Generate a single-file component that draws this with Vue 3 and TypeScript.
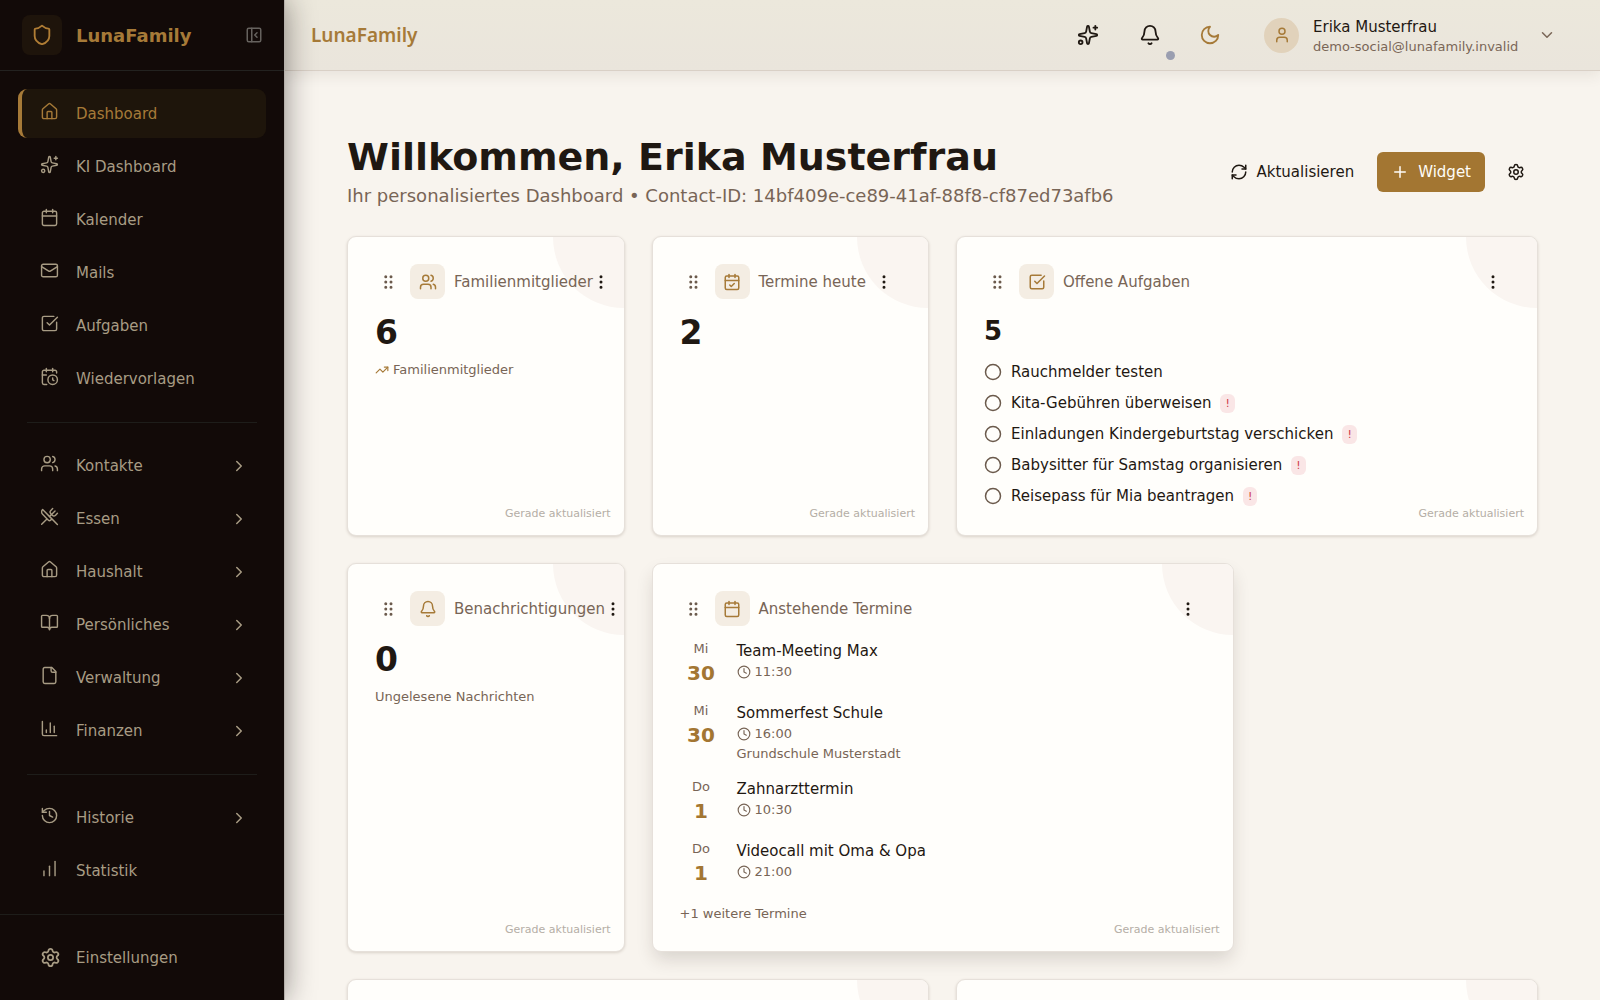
<script setup lang="ts">
import { h, type FunctionalComponent } from 'vue'

/* Outline icons on a 24 × 24 grid; each entry lists the paths of one glyph. */
const glyphs: Record<string, string[]> = {
  shield: ['M20 13c0 5-3.500 7.500-7.660 8.950a1 1 0 0 1-.67-.01C7.500 20.500 4 18 4 13V6a1 1 0 0 1 1-1c2 0 4.500-1.200 6.240-2.720a1.170 1.170 0 0 1 1.520 0C14.510 3.810 17 5 19 5a1 1 0 0 1 1 1z'],
  panel: ['M5 3h14a2 2 0 0 1 2 2v14a2 2 0 0 1-2 2H5a2 2 0 0 1-2-2V5a2 2 0 0 1 2-2z', 'M9 3v18', 'm16 15-3-3 3-3'],
  house: ['M15 21v-8a1 1 0 0 0-1-1h-4a1 1 0 0 0-1 1v8', 'M3 10a2 2 0 0 1 .709-1.528l7-5.999a2 2 0 0 1 2.582 0l7 5.999A2 2 0 0 1 21 10v9a2 2 0 0 1-2 2H5a2 2 0 0 1-2-2z'],
  sparkles: ['M11.017 2.814a1 1 0 0 1 1.966 0l1.051 5.558a2 2 0 0 0 1.594 1.594l5.558 1.051a1 1 0 0 1 0 1.966l-5.558 1.051a2 2 0 0 0-1.594 1.594l-1.051 5.558a1 1 0 0 1-1.966 0l-1.051-5.558a2 2 0 0 0-1.594-1.594l-5.558-1.051a1 1 0 0 1 0-1.966l5.558-1.051a2 2 0 0 0 1.594-1.594z', 'M20 2v4', 'M22 4h-4', 'M2 20a2 2 0 1 0 4 0a2 2 0 1 0-4 0'],
  calendar: ['M8 2v4', 'M16 2v4', 'M5 4h14a2 2 0 0 1 2 2v14a2 2 0 0 1-2 2H5a2 2 0 0 1-2-2V6a2 2 0 0 1 2-2z', 'M3 10h18'],
  calendarCheck: ['M8 2v4', 'M16 2v4', 'M5 4h14a2 2 0 0 1 2 2v14a2 2 0 0 1-2 2H5a2 2 0 0 1-2-2V6a2 2 0 0 1 2-2z', 'M3 10h18', 'm9 16 2 2 4-4'],
  calendarClock: ['M16 14v2.200l1.600 1', 'M16 2v4', 'M21 7.500V6a2 2 0 0 0-2-2H5a2 2 0 0 0-2 2v14a2 2 0 0 0 2 2h3.500', 'M3 10h5', 'M8 2v4', 'M10 16a6 6 0 1 0 12 0a6 6 0 1 0-12 0'],
  mail: ['m22 7-8.991 5.727a2 2 0 0 1-2.009 0L2 7', 'M4 4h16a2 2 0 0 1 2 2v12a2 2 0 0 1-2 2H4a2 2 0 0 1-2-2V6a2 2 0 0 1 2-2z'],
  check: ['M21 10.500V19a2 2 0 0 1-2 2H5a2 2 0 0 1-2-2V5a2 2 0 0 1 2-2h12.500', 'm9 11 3 3L22 4'],
  users: ['M16 21v-2a4 4 0 0 0-4-4H6a4 4 0 0 0-4 4v2', 'M16 3.128a4 4 0 0 1 0 7.744', 'M22 21v-2a4 4 0 0 0-3-3.870', 'M5 7a4 4 0 1 0 8 0a4 4 0 1 0-8 0'],
  user: ['M19 21v-2a4 4 0 0 0-4-4H9a4 4 0 0 0-4 4v2', 'M8 7a4 4 0 1 0 8 0a4 4 0 1 0-8 0'],
  food: ['m16 2-2.300 2.300a3 3 0 0 0 0 4.200l1.800 1.800a3 3 0 0 0 4.200 0L22 8', 'M15 15 3.300 3.300a4.200 4.200 0 0 0 0 6l7.300 7.300c.7.7 2 .7 2.800 0L15 15Zm0 0 7 7', 'm2.100 21.800 6.400-6.300', 'm19 5-7 7'],
  book: ['M12 7v14', 'M3 18a1 1 0 0 1-1-1V4a1 1 0 0 1 1-1h5a4 4 0 0 1 4 4 4 4 0 0 1 4-4h5a1 1 0 0 1 1 1v13a1 1 0 0 1-1 1h-6a3 3 0 0 0-3 3 3 3 0 0 0-3-3z'],
  file: ['M15 2H6a2 2 0 0 0-2 2v16a2 2 0 0 0 2 2h12a2 2 0 0 0 2-2V7Z', 'M14 2v4a2 2 0 0 0 2 2h4'],
  chart: ['M3 3v16a2 2 0 0 0 2 2h16', 'M18 17V9', 'M13 17V5', 'M8 17v-3'],
  history: ['M3 12a9 9 0 1 0 9-9 9.750 9.750 0 0 0-6.740 2.740L3 8', 'M3 3v5h5', 'M12 7v5l4 2'],
  bars: ['M5 21v-6', 'M12 21V9', 'M19 21V3'],
  gear: ['M9.671 4.136a2.340 2.340 0 0 1 4.659 0 2.340 2.340 0 0 0 3.319 1.915 2.340 2.340 0 0 1 2.330 4.033 2.340 2.340 0 0 0 0 3.831 2.340 2.340 0 0 1-2.330 4.033 2.340 2.340 0 0 0-3.319 1.915 2.340 2.340 0 0 1-4.659 0 2.340 2.340 0 0 0-3.320-1.915 2.340 2.340 0 0 1-2.330-4.033 2.340 2.340 0 0 0 0-3.831A2.340 2.340 0 0 1 6.350 6.051a2.340 2.340 0 0 0 3.319-1.915', 'M9 12a3 3 0 1 0 6 0a3 3 0 1 0-6 0'],
  right: ['m9 18 6-6-6-6'],
  down: ['m6 9 6 6 6-6'],
  bell: ['M10.268 21a2 2 0 0 0 3.464 0', 'M3.262 15.326A1 1 0 0 0 4 17h16a1 1 0 0 0 .740-1.673C19.410 13.956 18 12.499 18 8A6 6 0 0 0 6 8c0 4.499-1.411 5.956-2.738 7.326'],
  moon: ['M12 3a6 6 0 0 0 9 9 9 9 0 1 1-9-9Z'],
  refresh: ['M3 12a9 9 0 0 1 9-9 9.750 9.750 0 0 1 6.740 2.740L21 8', 'M21 3v5h-5', 'M21 12a9 9 0 0 1-9 9 9.750 9.750 0 0 1-6.740-2.740L3 16', 'M8 16H3v5'],
  plus: ['M5 12h14', 'M12 5v14'],
  trend: ['M16 7h6v6', 'm22 7-8.500 8.500-5-5L2 17'],
  clock: ['M12 6v6l4 2', 'M2 12a10 10 0 1 0 20 0a10 10 0 1 0-20 0'],
  circle: ['M2 12a10 10 0 1 0 20 0a10 10 0 1 0-20 0'],
  more: [5, 12, 19].map((y) => `M11 ${y}a1 1 0 1 0 2 0a1 1 0 1 0-2 0`),
  grip: [8, 15].flatMap((x) => [5, 12, 19].map((y) => `M${x} ${y}a1 1 0 1 0 2 0a1 1 0 1 0-2 0`)),
}

const Icon: FunctionalComponent<{ name: string; size: number }> = (props) =>
  h(
    'svg',
    {
      width: props.size,
      height: props.size,
      viewBox: '0 0 24 24',
      fill: 'none',
      stroke: 'currentColor',
      'stroke-width': 2,
      'stroke-linecap': 'round',
      'stroke-linejoin': 'round',
      'aria-hidden': 'true',
    },
    glyphs[props.name].map((d) => h('path', { d })),
  )
Icon.props = ['name', 'size']

interface NavItem {
  label: string
  icon: string
  expandable?: boolean
  active?: boolean
}

const navGroups: NavItem[][] = [
  [
    { label: 'Dashboard', icon: 'house', active: true },
    { label: 'KI Dashboard', icon: 'sparkles' },
    { label: 'Kalender', icon: 'calendar' },
    { label: 'Mails', icon: 'mail' },
    { label: 'Aufgaben', icon: 'check' },
    { label: 'Wiedervorlagen', icon: 'calendarClock' },
  ],
  [
    { label: 'Kontakte', icon: 'users', expandable: true },
    { label: 'Essen', icon: 'food', expandable: true },
    { label: 'Haushalt', icon: 'house', expandable: true },
    { label: 'Persönliches', icon: 'book', expandable: true },
    { label: 'Verwaltung', icon: 'file', expandable: true },
    { label: 'Finanzen', icon: 'chart', expandable: true },
  ],
  [
    { label: 'Historie', icon: 'history', expandable: true },
    { label: 'Statistik', icon: 'bars' },
  ],
]

interface Task {
  title: string
  urgent: boolean
}

interface Appointment {
  weekday: string
  day: number
  title: string
  time: string
  place?: string
}

interface Widget {
  title: string
  icon: string
  wide?: boolean
  raised?: boolean
  value?: number
  note?: string
  trend?: boolean
  tasks?: Task[]
  appointments?: Appointment[]
  more?: string
}

const widgets: Widget[] = [
  { title: 'Familienmitglieder', icon: 'users', value: 6, note: 'Familienmitglieder', trend: true },
  { title: 'Termine heute', icon: 'calendarCheck', value: 2 },
  {
    title: 'Offene Aufgaben',
    icon: 'check',
    wide: true,
    value: 5,
    tasks: [
      { title: 'Rauchmelder testen', urgent: false },
      { title: 'Kita-Gebühren überweisen', urgent: true },
      { title: 'Einladungen Kindergeburtstag verschicken', urgent: true },
      { title: 'Babysitter für Samstag organisieren', urgent: true },
      { title: 'Reisepass für Mia beantragen', urgent: true },
    ],
  },
  { title: 'Benachrichtigungen', icon: 'bell', value: 0, note: 'Ungelesene Nachrichten' },
  {
    title: 'Anstehende Termine',
    icon: 'calendar',
    wide: true,
    raised: true,
    appointments: [
      { weekday: 'Mi', day: 30, title: 'Team-Meeting Max', time: '11:30' },
      { weekday: 'Mi', day: 30, title: 'Sommerfest Schule', time: '16:00', place: 'Grundschule Musterstadt' },
      { weekday: 'Do', day: 1, title: 'Zahnarzttermin', time: '10:30' },
      { weekday: 'Do', day: 1, title: 'Videocall mit Oma & Opa', time: '21:00' },
    ],
    more: '+1 weitere Termine',
  },
]
</script>

<template>
  <div class="shell">
    <aside class="sidebar">
      <div class="brand">
        <span class="brand-mark"><Icon name="shield" :size="22" /></span>
        <strong class="brand-name">LunaFamily</strong>
        <button class="collapse" type="button" aria-label="Seitenleiste einklappen"><Icon name="panel" :size="18" /></button>
      </div>
      <nav class="nav" aria-label="Hauptnavigation">
        <ul v-for="(group, index) in navGroups" :key="index" class="nav-group">
          <li v-for="item in group" :key="item.label">
            <a href="#" class="nav-link" :class="{ active: item.active }">
              <Icon class="nav-icon" :name="item.icon" :size="19" />
              <span class="nav-label">{{ item.label }}</span>
              <Icon v-if="item.expandable" name="right" :size="18" />
            </a>
          </li>
        </ul>
      </nav>
      <div class="nav-footer">
        <a href="#" class="nav-link settings">
          <Icon name="gear" :size="21" />
          <span class="nav-label">Einstellungen</span>
        </a>
      </div>
    </aside>

    <div class="page">
      <header class="topbar">
        <span class="product">LunaFamily</span>
        <button class="tool" type="button" aria-label="KI-Assistent"><Icon name="sparkles" :size="22" /></button>
        <button class="tool" type="button" aria-label="Benachrichtigungen"><Icon name="bell" :size="22" /><span class="dot"></span></button>
        <button class="tool moon" type="button" aria-label="Dunkles Design"><Icon name="moon" :size="22" /></button>
        <button class="account" type="button">
          <span class="avatar"><Icon name="user" :size="18" /></span>
          <span class="identity">
            <span class="name">Erika Musterfrau</span>
            <span class="mail">demo-social@lunafamily.invalid</span>
          </span>
          <Icon name="down" :size="18" />
        </button>
      </header>

      <main class="content">
        <div class="intro">
          <div>
            <h1>Willkommen, Erika Musterfrau</h1>
            <p>Ihr personalisiertes Dashboard • Contact-ID: 14bf409e-ce89-41af-88f8-cf87ed73afb6</p>
          </div>
          <div class="actions">
            <button class="action" type="button"><Icon name="refresh" :size="18" />Aktualisieren</button>
            <button class="action primary" type="button"><Icon name="plus" :size="18" />Widget</button>
            <button class="action square" type="button" aria-label="Dashboard-Einstellungen"><Icon name="gear" :size="18" /></button>
          </div>
        </div>

        <div class="grid">
          <section v-for="w in widgets" :key="w.title" class="card" :class="{ wide: w.wide, raised: w.raised }">
            <div class="card-head">
              <button class="grip" type="button" aria-label="Widget verschieben"><Icon name="grip" :size="18" /></button>
              <span class="card-icon"><Icon :name="w.icon" :size="18" /></span>
              <h2>{{ w.title }}</h2>
              <button class="more" type="button" aria-label="Widget-Menü"><Icon name="more" :size="18" /></button>
            </div>
            <p v-if="w.value !== undefined" class="value" :class="{ compact: w.tasks }">{{ w.value }}</p>
            <p v-if="w.note" class="note"><Icon v-if="w.trend" class="trend" name="trend" :size="14" />{{ w.note }}</p>
            <ul v-if="w.tasks" class="tasks">
              <li v-for="task in w.tasks" :key="task.title">
                <Icon class="ring" name="circle" :size="18" />
                <span>{{ task.title }}</span>
                <span v-if="task.urgent" class="urgent">!</span>
              </li>
            </ul>
            <ul v-if="w.appointments" class="appointments">
              <li v-for="a in w.appointments" :key="a.title">
                <span class="date"><span class="weekday">{{ a.weekday }}</span><strong>{{ a.day }}</strong></span>
                <span class="details">
                  <span class="event">{{ a.title }}</span>
                  <span class="time"><Icon name="clock" :size="14" />{{ a.time }}</span>
                  <span v-if="a.place" class="place">{{ a.place }}</span>
                </span>
              </li>
            </ul>
            <p v-if="w.more" class="rest">{{ w.more }}</p>
            <span class="updated">Gerade aktualisiert</span>
          </section>
          <section class="card wide" aria-label="Weiteres Widget"></section>
          <section class="card wide" aria-label="Weiteres Widget"></section>
        </div>
      </main>
    </div>
  </div>
</template>

<style>
body {
  margin: 0;
  background: #f8f4ee;
}
</style>

<style scoped>
.shell {
  display: flex;
  height: 100vh;
  overflow: hidden;
  font-family: "DejaVu Sans", sans-serif;
  font-size: 15px;
  color: #1f1812;
}
.shell * {
  box-sizing: border-box;
}
svg {
  flex: none;
  display: block;
}
button {
  display: flex;
  align-items: center;
  justify-content: center;
  padding: 0;
  border: 0;
  background: none;
  font: inherit;
  color: inherit;
  cursor: pointer;
}
ul {
  margin: 0;
  padding: 0;
  list-style: none;
}
h1, h2, p {
  margin: 0;
}

/* Sidebar */
.sidebar {
  position: relative;
  z-index: 2;
  flex: none;
  display: flex;
  flex-direction: column;
  width: 285px;
  background: #120a08;
  color: #a89c84;
  border-right: 1px solid #b4afaa;
  box-shadow: 0 0 28px rgba(18, 10, 8, 0.45);
}
.brand {
  flex: none;
  display: flex;
  align-items: center;
  gap: 14px;
  height: 71px;
  padding: 0 18px 0 22px;
  border-bottom: 1px solid #232220;
}
.brand-mark {
  display: flex;
  align-items: center;
  justify-content: center;
  width: 40px;
  height: 40px;
  border-radius: 8px;
  background: #1e140b;
  color: #b07d35;
}
.brand-name {
  flex: 1;
  font-size: 18px;
  color: #a67a38;
}
.collapse {
  width: 24px;
  height: 24px;
  color: #66625e;
}
.nav {
  flex: 1;
  min-height: 0;
  overflow: hidden;
  padding: 18px 18px 0;
}
.nav-group {
  display: flex;
  flex-direction: column;
  gap: 4px;
}
.nav-group::after {
  content: "";
  height: 1px;
  margin: 15px 9px 18px;
  background: #1e1d1a;
}
.nav-link {
  display: flex;
  align-items: center;
  gap: 17px;
  height: 49px;
  padding: 0 18px 0 22px;
  border-radius: 9px;
  color: inherit;
  text-decoration: none;
}
.nav-link.active {
  padding-left: 18px;
  border-left: 4px solid #a67a38;
  background: #1e150b;
  color: #a67a38;
}
.nav-icon {
  margin-bottom: 5px;
  stroke-width: 1.8;
}
.nav-label {
  flex: 1;
}
.nav-footer {
  flex: none;
  padding: 18px;
  border-top: 1px solid #1e1d1a;
}
.nav-link.settings {
  gap: 15px;
}

/* Top bar */
.page {
  flex: 1;
  min-width: 0;
  display: flex;
  flex-direction: column;
}
.topbar {
  position: relative;
  z-index: 1;
  flex: none;
  display: flex;
  align-items: center;
  height: 71px;
  padding: 0 44px 0 26px;
  background: linear-gradient(#ece8dc, #eae5dc);
  border-bottom: 1px solid #d9d0c6;
  box-shadow: 0 4px 14px rgba(60, 40, 20, 0.09);
}
.product {
  flex: 1;
  font: 600 19px "Noto Sans", sans-serif;
  color: #a67a38;
}
.tool {
  position: relative;
  width: 44px;
  height: 44px;
  margin-right: 18px;
}
.tool.moon {
  margin-right: 32px;
  margin-left: -2px;
  color: #a67a38;
}
.dot {
  position: absolute;
  right: -3px;
  bottom: -3px;
  width: 9px;
  height: 9px;
  border-radius: 50%;
  background: #9a9eb0;
}
.account {
  gap: 14px;
  text-align: left;
  color: #7a6657;
}
.avatar {
  display: flex;
  align-items: center;
  justify-content: center;
  width: 35px;
  height: 35px;
  border-radius: 50%;
  background: #e1d2bb;
  color: #a67a38;
}
.identity {
  display: flex;
  flex-direction: column;
  min-width: 211px;
  padding-top: 3px;
  line-height: 20px;
}
.name {
  color: #1f1812;
}
.mail {
  font-size: 13px;
}

/* Content */
.content {
  flex: 1;
  min-height: 0;
  overflow-y: auto;
  scrollbar-width: none;
  padding: 62px;
}
.intro {
  display: flex;
  align-items: center;
  justify-content: space-between;
  margin-bottom: 25px;
}
h1 {
  font-size: 38px;
  line-height: 48px;
  white-space: nowrap;
}
.intro p {
  font-size: 18px;
  line-height: 30px;
  color: #786556;
}
.actions {
  display: flex;
  gap: 9px;
}
.action {
  gap: 9px;
  height: 40px;
  padding: 0 14px;
  border-radius: 6px;
}
.action.primary {
  background: #a37632;
  color: #fffdf8;
}
.action.square {
  width: 44px;
  padding: 0;
}
.grid {
  display: grid;
  grid-template-columns: repeat(4, minmax(0, 1fr));
  gap: 27px;
}
.card {
  position: relative;
  overflow: hidden;
  min-height: 299px;
  padding: 27px;
  border: 1px solid #e6e0da;
  border-radius: 9px;
  background: #fffefb;
  box-shadow: 0 1px 3px rgba(60, 40, 20, 0.16);
}
.card::before {
  content: "";
  position: absolute;
  top: 0;
  right: 0;
  width: 71px;
  height: 71px;
  border-radius: 0 0 0 100%;
  background: #faf5f1;
}
.card.wide {
  grid-column: span 2;
}
.card.raised {
  box-shadow: 0 9px 18px -2px rgba(50, 40, 30, 0.16);
}
.card-head {
  position: relative;
  display: flex;
  align-items: center;
  gap: 9px;
  height: 35px;
}
.grip {
  flex: none;
  width: 26px;
  height: 26px;
  color: #6b5a4c;
}
.card-icon {
  flex: none;
  display: flex;
  align-items: center;
  justify-content: center;
  width: 35px;
  height: 35px;
  border-radius: 8px;
  background: #f4ede3;
  color: #a67a38;
}
h2 {
  flex: 1 0 auto;
  margin-right: -9px;
  font-size: 15px;
  font-weight: 400;
  white-space: nowrap;
  color: #786556;
}
.more {
  flex: 0 1 35px;
  min-width: 16px;
  height: 35px;
}
.value {
  margin-top: 14px;
  font-size: 33px;
  font-weight: 700;
  line-height: 40px;
}
.value.compact {
  font-size: 26px;
  line-height: 36px;
}
.note {
  display: flex;
  align-items: center;
  gap: 4px;
  margin-top: 7px;
  font-size: 13px;
  line-height: 20px;
  color: #786556;
}
.trend {
  color: #a67a38;
}
.tasks {
  display: flex;
  flex-direction: column;
  gap: 7px;
  margin-top: 11px;
}
.tasks li {
  display: flex;
  align-items: center;
  gap: 9px;
  height: 24px;
}
.ring {
  color: #6b5a4c;
}
.urgent {
  padding: 0 5px;
  border-radius: 6px;
  background: #fae6e6;
  font-size: 11px;
  line-height: 19px;
  color: #cf3c46;
}
.appointments {
  display: flex;
  flex-direction: column;
  gap: 14px;
  margin-top: 14px;
}
.appointments li {
  display: flex;
  gap: 14px;
  min-height: 48px;
}
.date {
  display: flex;
  flex-direction: column;
  align-items: center;
  width: 43px;
  font-size: 13px;
  line-height: 18px;
  color: #786556;
}
.date strong {
  font-size: 20px;
  line-height: 30px;
  color: #a37632;
}
.details {
  display: flex;
  flex-direction: column;
  font-size: 13px;
  line-height: 20px;
  color: #786556;
}
.event {
  font-size: 15px;
  line-height: 22px;
  color: #1f1812;
}
.time {
  display: flex;
  align-items: center;
  gap: 4px;
}
.rest {
  margin-top: 16px;
  font-size: 13px;
  line-height: 20px;
  color: #786556;
}
.updated {
  position: absolute;
  right: 13px;
  bottom: 13px;
  font-size: 11px;
  line-height: 16px;
  color: #b5aea6;
}
</style>
